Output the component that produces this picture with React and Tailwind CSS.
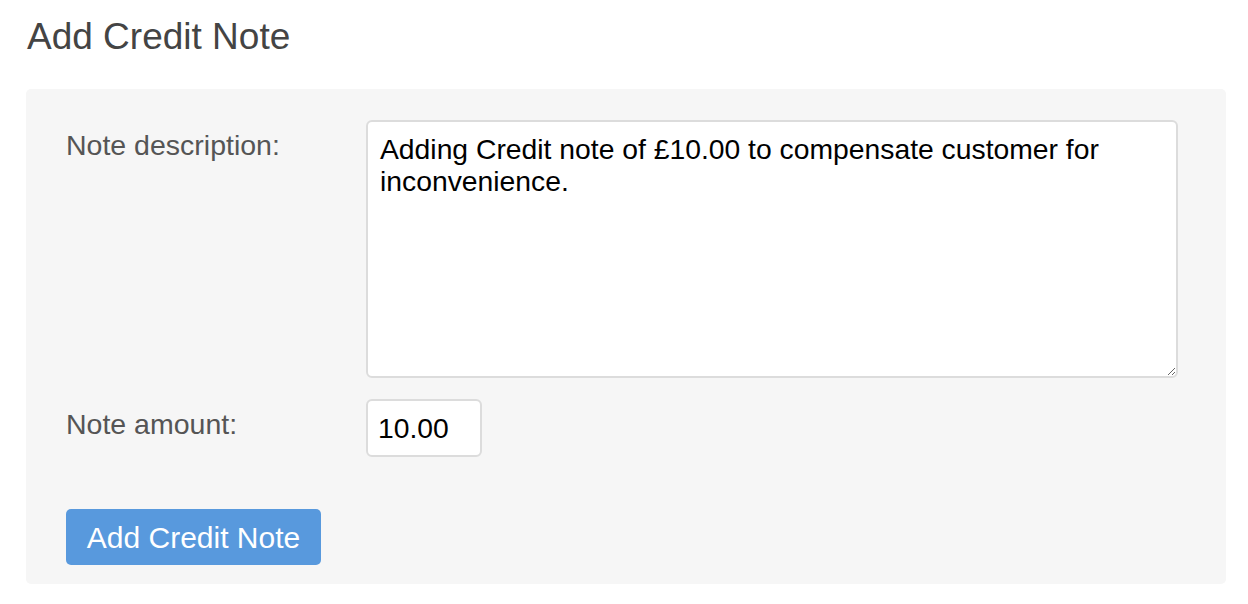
export default function App() {
  return (
    <div className="min-h-screen w-full bg-white font-['Liberation_Sans',Arial,sans-serif]">
      <div className="pl-[26px] pr-[22px] pt-[14px]">
        <h1 className="pl-px text-[37px] leading-[46px] text-[#444]">Add Credit Note</h1>
        <div className="mt-[29px] rounded-[5px] bg-[#f6f6f6] pl-[40px] pr-[48px] pt-[31px] pb-[19px]">
          <div className="flex">
            <label className="w-[300px] shrink-0 pt-[9px] text-[28.5px] leading-[32px] text-[#555]">
              Note description:
            </label>
            <textarea
              className="h-[258px] flex-1 resize-y rounded-[6px] border-2 border-[#dcdcdc] bg-white px-[12px] py-[11px] text-[28.3px] leading-[32px] text-black outline-none"
              defaultValue="Adding Credit note of £10.00 to compensate customer for inconvenience."
            />
          </div>
          <div className="mt-[21px] flex">
            <label className="w-[300px] shrink-0 pt-[9px] text-[28.5px] leading-[32px] text-[#555]">
              Note amount:
            </label>
            <input
              className="h-[58px] w-[116px] rounded-[6px] border-2 border-[#dcdcdc] bg-white px-[10px] text-[28.3px] text-black outline-none"
              defaultValue="10.00"
            />
          </div>
          <button className="mt-[52px] h-[56px] w-[255px] rounded-[5px] bg-[#5899dd] text-[30px] text-white">
            Add Credit Note
          </button>
        </div>
      </div>
    </div>
  );
}
